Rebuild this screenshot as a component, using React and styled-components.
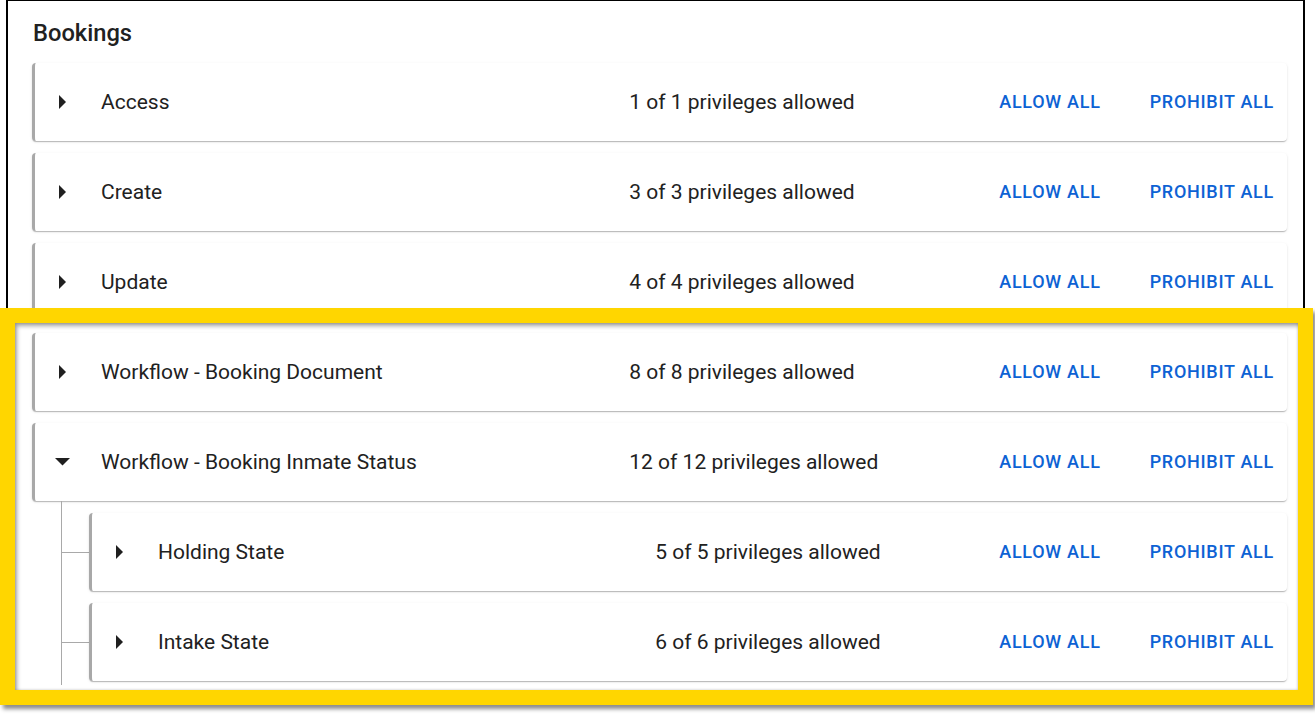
import React from 'react';
import styled, { createGlobalStyle } from 'styled-components';

const GlobalStyle = createGlobalStyle`
  html, body {
    margin: 0;
    padding: 0;
    background: #ffffff;
    font-family: 'Roboto', 'Liberation Sans', sans-serif;
    color: #212121;
    overflow: hidden;
  }
`;

const palette = {
  text: '#212121',
  blue: '#0d62d4',
  rail: '#a8a8a8',
  line: '#a9a9a9',
  yellow: '#ffd600',
};

const Page = styled.div`
  position: relative;
  width: 1315px;
  height: 719px;
`;

const Panel = styled.section`
  margin-left: 6px;
  width: 1299px;
  box-sizing: border-box;
  border: 2px solid #000;
  border-top-width: 1px;
  padding: 18px 16px 10px 24px;
`;

const Title = styled.h2`
  margin: 0 0 16px 1px;
  font-size: 23.7px;
  line-height: 28px;
  font-weight: 500;
  color: ${palette.text};
`;

const List = styled.div`
  display: flex;
  flex-direction: column;
  gap: 12px;
`;

const Card = styled.div`
  display: flex;
  align-items: center;
  flex: 1 1 auto;
  min-width: 0;
  height: 78px;
  box-sizing: border-box;
  background: #fff;
  border-left: 3px solid ${palette.rail};
  border-radius: 4px;
  padding-right: 5px;
  box-shadow: 0 2px 1px -1px rgba(0, 0, 0, 0.14), 0 1px 1px 0 rgba(0, 0, 0, 0.1),
    0 1px 3px 0 rgba(0, 0, 0, 0.1);
`;

const Toggle = styled.span`
  width: 55px;
  display: flex;
  justify-content: center;
  align-items: center;
  color: #1f1f1f;
`;

const Main = styled.div`
  flex: 1;
  display: flex;
  align-items: center;
  font-size: 21px;
  color: ${palette.text};
`;

const Label = styled.span`
  flex: 0 0 calc(54.4% + 49px);
  box-sizing: border-box;
  padding-left: 11px;
`;

const Count = styled.span`
  flex: 1;
`;

const Actions = styled.div`
  display: flex;
  align-items: center;
  gap: 33px;
`;

const ActionButton = styled.button`
  border: none;
  background: transparent;
  padding: 5px 8px 7px;
  font-family: 'Roboto', 'Liberation Sans', sans-serif;
  font-size: 18px;
  font-weight: 500;
  letter-spacing: 0.72px;
  text-transform: uppercase;
  color: ${palette.blue};
  cursor: pointer;
`;

const NestedGroup = styled.div`
  margin-left: 29px;
  margin-top: -12px;
  padding: 12px 0 4px;
  border-left: 1px solid ${palette.line};
  display: flex;
  flex-direction: column;
  gap: 12px;
`;

const Branch = styled.div`
  display: flex;
  align-items: center;
`;

const Connector = styled.span`
  flex: none;
  width: 27px;
  height: 1px;
  background: ${palette.line};
`;

const Highlight = styled.div`
  position: absolute;
  left: 0;
  top: 308px;
  width: 1313px;
  height: 397px;
  box-sizing: border-box;
  border: 15px solid ${palette.yellow};
  pointer-events: none;
  box-shadow: 3px 4px 4px rgba(0, 0, 0, 0.45), inset 2px 3px 4px rgba(0, 0, 0, 0.35),
    inset 0 0 3px rgba(0, 0, 0, 0.2);
`;

const CaretRight = () => (
  <svg width="7" height="14" viewBox="0 0 7 14">
    <polygon points="0,0 7,7 0,14" fill="currentColor" />
  </svg>
);

const CaretDown = () => (
  <svg width="15" height="8" viewBox="0 0 15 8">
    <polygon points="0,0 15,0 7.5,7.5" fill="currentColor" />
  </svg>
);

const groups = [
  { label: 'Access', allowed: 1, total: 1 },
  { label: 'Create', allowed: 3, total: 3 },
  { label: 'Update', allowed: 4, total: 4 },
  { label: 'Workflow - Booking Document', allowed: 8, total: 8 },
  {
    label: 'Workflow - Booking Inmate Status',
    allowed: 12,
    total: 12,
    expanded: true,
    children: [
      { label: 'Holding State', allowed: 5, total: 5 },
      { label: 'Intake State', allowed: 6, total: 6 },
    ],
  },
];

const PrivilegeRow = ({ item }) => (
  <Card>
    <Toggle>{item.expanded ? <CaretDown /> : <CaretRight />}</Toggle>
    <Main>
      <Label>{item.label}</Label>
      <Count>
        {item.allowed} of {item.total} privileges allowed
      </Count>
    </Main>
    <Actions>
      <ActionButton>Allow all</ActionButton>
      <ActionButton>Prohibit all</ActionButton>
    </Actions>
  </Card>
);

const App = () => (
  <>
    <GlobalStyle />
    <Page>
      <Panel>
        <Title>Bookings</Title>
        <List>
          {groups.map((g) => (
            <React.Fragment key={g.label}>
              <PrivilegeRow item={g} />
              {g.expanded && g.children && (
                <NestedGroup>
                  {g.children.map((c) => (
                    <Branch key={c.label}>
                      <Connector />
                      <PrivilegeRow item={c} />
                    </Branch>
                  ))}
                </NestedGroup>
              )}
            </React.Fragment>
          ))}
        </List>
      </Panel>
      <Highlight />
    </Page>
  </>
);

export default App;
